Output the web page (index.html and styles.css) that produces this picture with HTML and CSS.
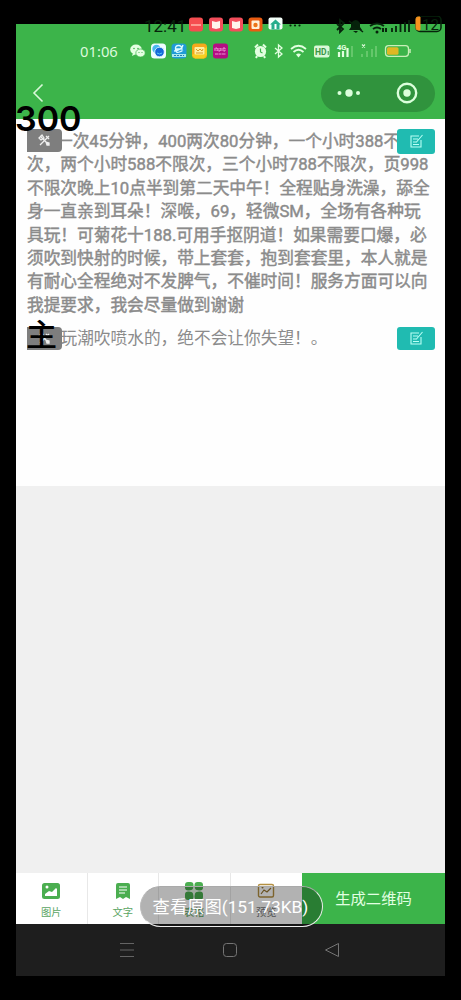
FILE: index.html
```html
<!DOCTYPE html>
<html lang="zh-CN">
<head>
<meta charset="utf-8">
<title>查看原图</title>
<link rel="stylesheet" href="styles.css">
</head>
<body>
<main class="phone">
  <header class="header">
    <div class="status">
      <span class="time">01:06</span>
      <svg class="status-apps" width="99" height="16" viewBox="0 0 99 16">
        <g fill="#e4ffe2"><ellipse cx="6" cy="6.5" rx="5.8" ry="5"/><path d="M3 10l-1 3 4-2z"/><ellipse cx="10.5" cy="10" rx="4.7" ry="4" stroke="#3cb44a" stroke-width=".7"/></g>
        <g fill="#3cb44a"><circle cx="4" cy="5.5" r=".8"/><circle cx="8" cy="5.5" r=".8"/><circle cx="9" cy="9.5" r=".6"/><circle cx="12" cy="9.5" r=".6"/></g>
        <rect x="21" y=".5" width="15" height="15" rx="3.5" fill="#eefcff"/><circle cx="26.500" cy="6" r="4.200" fill="#48b9ed"/><circle cx="29.500" cy="9" r="4.800" fill="#1469d8" stroke="#eefcff" stroke-width=".8"/><path d="M27 10q2.500 2 5 0" stroke="#58c7f5" fill="none"/>
        <rect x="41.500" y=".5" width="15" height="15" rx="3.500" fill="#209bd7"/><path d="M46 6h6q0-3.500-3.500-3.500T45.500 6.500t4 2.500 3-1.500M44 8q8-1 9-6" fill="none" stroke="#d9fbff" stroke-width="1.300"/><path d="M42 11h14v3H42z" fill="#a7e9ee"/><path d="M44 12.500h10" stroke="#287fa9" stroke-dasharray="2 1"/>
        <rect x="62" y=".5" width="15" height="15" rx="3.500" fill="#f6a81c"/><path d="M62 12l3 3.500h9l3-4V4z" fill="#f5cf20"/><rect x="64.500" y="4" width="10" height="7.500" rx="1" fill="#fff0a0"/><path d="M66 6l2 2 2-2 2 2 1-2M66 10h7" fill="none" stroke="#d99b24"/>
        <rect x="83" y=".5" width="15" height="15" rx="3" fill="#b40d83"/><path d="M85 8V5h2v3m1-3v3h2V5m1 0v3m2-3h2v3h-2zM85 11h11" fill="none" stroke="#f2a9df" stroke-width=".9" stroke-dasharray="3 .5"/>
      </svg>
      <svg class="status-system" width="157" height="16" viewBox="0 0 157 16">
        <circle cx="6.500" cy="8.500" r="5.600" fill="#e2ffe0"/><path d="M1 4.500l3-3M12 4.500l-3-3M3 13l-1 2M10 13l1 2" stroke="#e2ffe0" stroke-width="2"/><path d="M6.500 5.500v3.500l2 1" fill="none" stroke="#3cb44a" stroke-width="1.200"/>
        <g fill="none" stroke="#e2ffe0">
          <path d="M21 5l7 6-3.500 3V2L28 5l-7 6" stroke-width="1.300"/>
          <path d="M37 6q7.500-6.500 15 0M39.500 9q5-4.500 10 0" stroke-width="1.700"/><path d="M42 11.500q2.500-2 5 0l-2.500 3z" fill="#e2ffe0" stroke="none"/>
        </g>
        <rect x="60" y="2.500" width="15.500" height="12" rx="2" fill="#d9f8d7"/><text x="61" y="12" font-size="8.500" font-weight="700" fill="#3a9645">HD</text><path d="M74.200 8v4" stroke="#3a9645"/>
        <text x="83" y="7" font-size="7.500" font-weight="700" fill="#e2ffe0">4G</text>
        <path d="M85 14V9M89 14V8M93.500 14V5" stroke="#e2ffe0" stroke-width="2.200"/><path d="M98 14V3M108 14v-3M113 14V8M118 14V6M122 14V3" stroke="#65c76b" stroke-width="2"/><path d="M108 1.500l3 3m0-3l-3 3" stroke="#d7f7d4" stroke-width="1.200"/>
        <rect x="131.500" y="2.700" width="23" height="10.600" rx="3" fill="none" stroke="#c9efb8" stroke-width="1.300"/><rect x="133" y="4.200" width="11.500" height="7.600" rx="1.500" fill="#deb824"/><path d="M156 6v4" stroke="#c9efb8" stroke-width="1.500"/>
      </svg>
    </div>
    <div class="toolbar">
      <svg class="back" width="14" height="20" viewBox="0 0 14 20"><path d="M10.500 1.500L2 10l8.500 8.500" fill="none" stroke="#d9f8d9" stroke-width="1.600"/></svg>
      <div class="capsule">
        <svg width="24" height="10" viewBox="0 0 24 10" fill="#dcffdc"><circle cx="2.500" cy="5" r="2"/><circle cx="12" cy="5" r="3.700"/><circle cx="21" cy="5" r="2"/></svg>
        <svg width="22" height="22" viewBox="0 0 22 22"><circle cx="11" cy="11" r="9.200" fill="none" stroke="#dcffdc" stroke-width="2.400"/><circle cx="11" cy="11" r="3.700" fill="#dcffdc"/></svg>
      </div>
    </div>
  </header>

  <section class="content">
    <article class="block block-main">
      <p class="line line-first">一次45分钟，400两次80分钟，一个小时388不</p>
      <p class="line">次，两个小时588不限次，三个小时788不限次，页998</p>
      <p class="line">不限次晚上10点半到第二天中午！全程贴身洗澡，舔全</p>
      <p class="line">身一直亲到耳朵！深喉，69，轻微SM，全场有各种玩</p>
      <p class="line">具玩！可菊花十188.可用手抠阴道！如果需要口爆，必</p>
      <p class="line">须吹到快射的时候，带上套套，抱到套套里，本人就是</p>
      <p class="line">有耐心全程绝对不发脾气，不催时间！服务方面可以向</p>
      <p class="line">我提要求，我会尽量做到谢谢</p>
      <span class="tool"><svg width="13" height="13" viewBox="0 0 13 13"><path d="M2 2l9 9M11 2L2 11M1 4l3-3 2 3-3 2zM8 2l3 3M8 8l3 1v2H9z" fill="none" stroke="#eee" stroke-width="1.300"/></svg></span>
      <span class="edit"><svg width="15" height="15" viewBox="0 0 15 15"><path d="M10 2H2v11h10V6M4 5h5M4 8h4M4 10.500h6M7.500 8l6-7" fill="none" stroke="#b9fff5" stroke-width="1.100"/></svg></span>
    </article>
    <article class="block block-extra">
      <p class="line">玩潮吹喷水的，绝不会让你失望！。</p>
      <span class="tool"><svg width="13" height="13" viewBox="0 0 13 13"><path d="M2 2l9 9M11 2L2 11M1 4l3-3 2 3-3 2zM8 2l3 3M8 8l3 1v2H9z" fill="none" stroke="#eee" stroke-width="1.300"/></svg></span>
      <span class="edit"><svg width="15" height="15" viewBox="0 0 15 15"><path d="M10 2H2v11h10V6M4 5h5M4 8h4M4 10.500h6M7.500 8l6-7" fill="none" stroke="#b9fff5" stroke-width="1.100"/></svg></span>
      <span class="mark">主</span>
    </article>
  </section>

  <div class="empty"></div>

  <footer class="tabs">
    <div class="tab"><svg width="20" height="18" viewBox="0 0 20 18"><rect x="1" y="1" width="18" height="16" rx="2.500" fill="#4bae50"/><circle cx="6" cy="5" r="1.500" fill="#fff"/><path d="M4 14V12l4-3 3 1 4-4 1 1v7z" fill="#fff"/></svg><span>图片</span></div>
    <div class="tab"><svg width="20" height="18" viewBox="0 0 20 18"><path d="M5 1h10q2 0 2 2v14l-4-2-3 2-3-2-4 2V3q0-2 2-2z" fill="#4bae50"/><path d="M6 5h8M6 8h8M6 11h6" stroke="#fff" stroke-width="1.200"/></svg><span>文字</span></div>
    <div class="tab"><svg width="20" height="18" viewBox="0 0 20 18" fill="#4bae50"><rect x="1" width="8.500" height="8.500" rx="3"/><rect x="10.500" width="8.500" height="8.500" rx="3"/><rect x="1" y="9.500" width="8.500" height="8.500" rx="3"/><rect x="10.500" y="9.500" width="8.500" height="8.500" rx="3"/><path d="M10 4l1.500 3.500L15 9l-3.500 1.500L10 14l-1.500-3.500L5 9l3.500-1.500z" fill="#e5f5e5"/></svg><span>表格</span></div>
    <div class="tab preview"><svg width="18" height="18" viewBox="0 0 18 18"><rect x="1.500" y="2.500" width="15" height="12.500" rx="1.500" fill="none" stroke="#b49042" stroke-width="1.400"/><path d="M4 12l3-4 3 2 4-4" fill="none" stroke="#94732f" stroke-width="1.200"/><circle cx="5.500" cy="5.500" r="1" fill="#94732f"/></svg><span>预览</span></div>
    <div class="generate">生成二维码</div>
  </footer>

  <nav class="nav">
    <svg width="16" height="16" viewBox="0 0 16 16"><path d="M1 1.500h14M1 8h14M1 14.500h14" stroke="#646464"/></svg>
    <svg width="16" height="16" viewBox="0 0 16 16"><rect x="1.500" y="1.500" width="13" height="13" rx="3" fill="none" stroke="#747474"/></svg>
    <svg width="16" height="16" viewBox="0 0 16 16"><path d="M14.500 1.500v13L1.500 8z" fill="none" stroke="#747474" stroke-linejoin="round"/></svg>
  </nav>
</main>

<div class="outer-status">
  <span class="outer-time">12:41</span>
  <svg class="outer-apps" width="113" height="16" viewBox="0 0 113 16">
    <rect x="0" y="1.500" width="14" height="14" rx="3" fill="#f54d50"/><path d="M2 9h10" stroke="#ffb4a9" stroke-width="1.500"/>
    <rect x="20" y="1.500" width="14" height="14" rx="3" fill="#f34e5b"/><path d="M23 5l4 1 4-1v7l-4 1-4-1z" fill="#fff4eb"/>
    <rect x="40" y="1.500" width="14" height="14" rx="3" fill="#f34e5b"/><path d="M43 5l4 1 4-1v7l-4 1-4-1z" fill="#fff4eb"/>
    <rect x="59.500" y="1.500" width="14" height="14" rx="3" fill="#e95c12"/><rect x="62.500" y="4.500" width="8" height="8.500" rx="1" fill="#fff2d8"/><circle cx="66.500" cy="9" r="2.200" fill="#ec7618"/>
    <rect x="79.500" y="1.500" width="14" height="12" rx="2" fill="#f4fff9"/><path d="M81 8.500l5.500-5 5.500 5h-1.500v5h-8v-5z" fill="#26ad8c"/><path d="M86.500 8v5" stroke="#fff" stroke-width="2"/>
    <g fill="#06230b"><circle cx="101.500" cy="9.500" r="1.100"/><circle cx="106" cy="9.500" r="1.100"/><circle cx="110.500" cy="9.500" r="1.100"/></g>
  </svg>
  <svg class="outer-system" width="109" height="18" viewBox="0 0 109 18">
    <g fill="none" stroke="#06230b" stroke-width="1.800"><path d="M1 8l6 5-3 3V4l4 3-7 7"/><path d="M34 10q7-5 14 0M37 13q4-3 8 0"/><path d="M56 16v-4M60 16v-6M64.500 16V8M69 16V6M73 16V4"/></g>
    <path d="M13 14l2-3V7q5-6 9 0v4l2 3zM17 15h5l-2 2z" fill="#06230b"/><path d="M13 5l14 11" stroke="#06230b" stroke-width="1.500"/><circle cx="41" cy="16" r="1.500" fill="#06230b"/><path d="M47 12v4m3-4v4" stroke="#06230b" stroke-width="2"/>
    <rect x="80" y="0" width="25" height="15.500" rx="4" fill="none" stroke="#06230b" stroke-width="1.500"/><path d="M84 1v13h-2q-2 0-2-2V3q0-2 2-2z" fill="#f7921e" stroke="#f7921e"/><text x="86" y="14" font-size="15" fill="#06230b">12</text>
  </svg>
</div>
<div class="price">300</div>
<button class="original">查看原图(151.73KB)</button>
</body>
</html>
```
FILE: styles.css
```css
* { box-sizing: border-box; }
body {
  position: relative;
  width: 461px;
  height: 1000px;
  margin: 0;
  padding: 24px 16px;
  overflow: hidden;
  background: #000;
  font-family: Roboto, "Noto Sans CJK SC", sans-serif;
}
svg { display: block; flex: none; }
.phone { display: flex; flex-direction: column; width: 429px; height: 952px; }

.header { height: 95px; background: #3cb44a; }
.status { display: flex; align-items: center; height: 35px; padding: 19px 0 0 64px; }
.time {
  width: 50px;
  color: #dcfadc;
  font: 14.8px/16px "Noto Sans", sans-serif;
}
.status-system { margin-left: 25px; }
.toolbar {
  display: flex;
  align-items: center;
  justify-content: space-between;
  height: 60px;
  padding: 8px 10px 0 16px;
}
.capsule {
  display: flex;
  align-items: center;
  justify-content: space-between;
  width: 114px;
  height: 37px;
  padding: 0 17px 0 16px;
  border-radius: 19px;
  background: #30933d;
}

.content { height: 367px; padding: 10px 11px 0; background: #fefefe; }
.block { position: relative; }
.block-main { height: 198px; padding-top: 1px; }
.line {
  height: 23.4px;
  margin: 0;
  color: #8b8b8b;
  font-size: 16.7px;
  line-height: 23.4px;
  white-space: nowrap;
}
.line-first { padding-left: 29px; }
.block-main .line { -webkit-text-stroke: 0.45px #8b8b8b; }
.block-extra { height: 25px; }
.block-extra .line { padding-left: 33.5px; }
.tool, .edit {
  position: absolute;
  top: 0;
  display: flex;
  align-items: center;
  justify-content: center;
}
.tool { left: 0; width: 35px; height: 23px; border-radius: 0 4px 4px 0; background: #7e7e7e; }
.edit { left: 370px; width: 38px; height: 25px; border-radius: 3px; background: #20bbb1; }
.block-extra .edit { height: 23px; }
.mark {
  position: absolute;
  top: -11px;
  left: -1px;
  color: #000;
  font-size: 31px;
  font-weight: 500;
  line-height: 40px;
}
.empty { height: 387px; background: #f0f0f0; }

.tabs { display: flex; height: 51px; background: #fff; }
.tab {
  display: flex;
  flex-direction: column;
  align-items: center;
  gap: 5px;
  width: 71.5px;
  padding-top: 9px;
  border-right: 1px solid #e8e8e8;
  color: #5ba563;
  font-size: 10.3px;
  line-height: 16px;
}
.preview { border-right: 0; color: #777; }
.generate { flex: 1; background: #3cb44a; color: #e2ffe2; font-size: 15.3px; line-height: 52px; text-align: center; }

.nav {
  display: flex;
  justify-content: space-between;
  align-items: center;
  height: 52px;
  padding: 0 105px 0 103px;
  background: #1e1e1e;
}

.outer-status { position: absolute; top: 16px; left: 144px; display: flex; width: 302px; height: 20px; }
.outer-time { width: 45px; color: #06230b; font-size: 17px; line-height: 21px; }
.outer-system { margin-left: 34px; }
.price { position: absolute; top: 98px; left: 15px; color: #000; font: 600 34px/42px Inter, sans-serif; }
.original {
  position: absolute;
  top: 886px;
  left: 140px;
  width: 183px;
  height: 41px;
  padding: 0 2px 0 0;
  border: 1.5px solid #eee;
  border-top-color: #aaa;
  border-left-color: #bbb;
  border-radius: 21px;
  background: rgba(0, 0, 0, .3);
  color: #fff;
  font: 17.3px/38px Roboto, "Noto Sans CJK SC", sans-serif;
  white-space: nowrap;
}
```
